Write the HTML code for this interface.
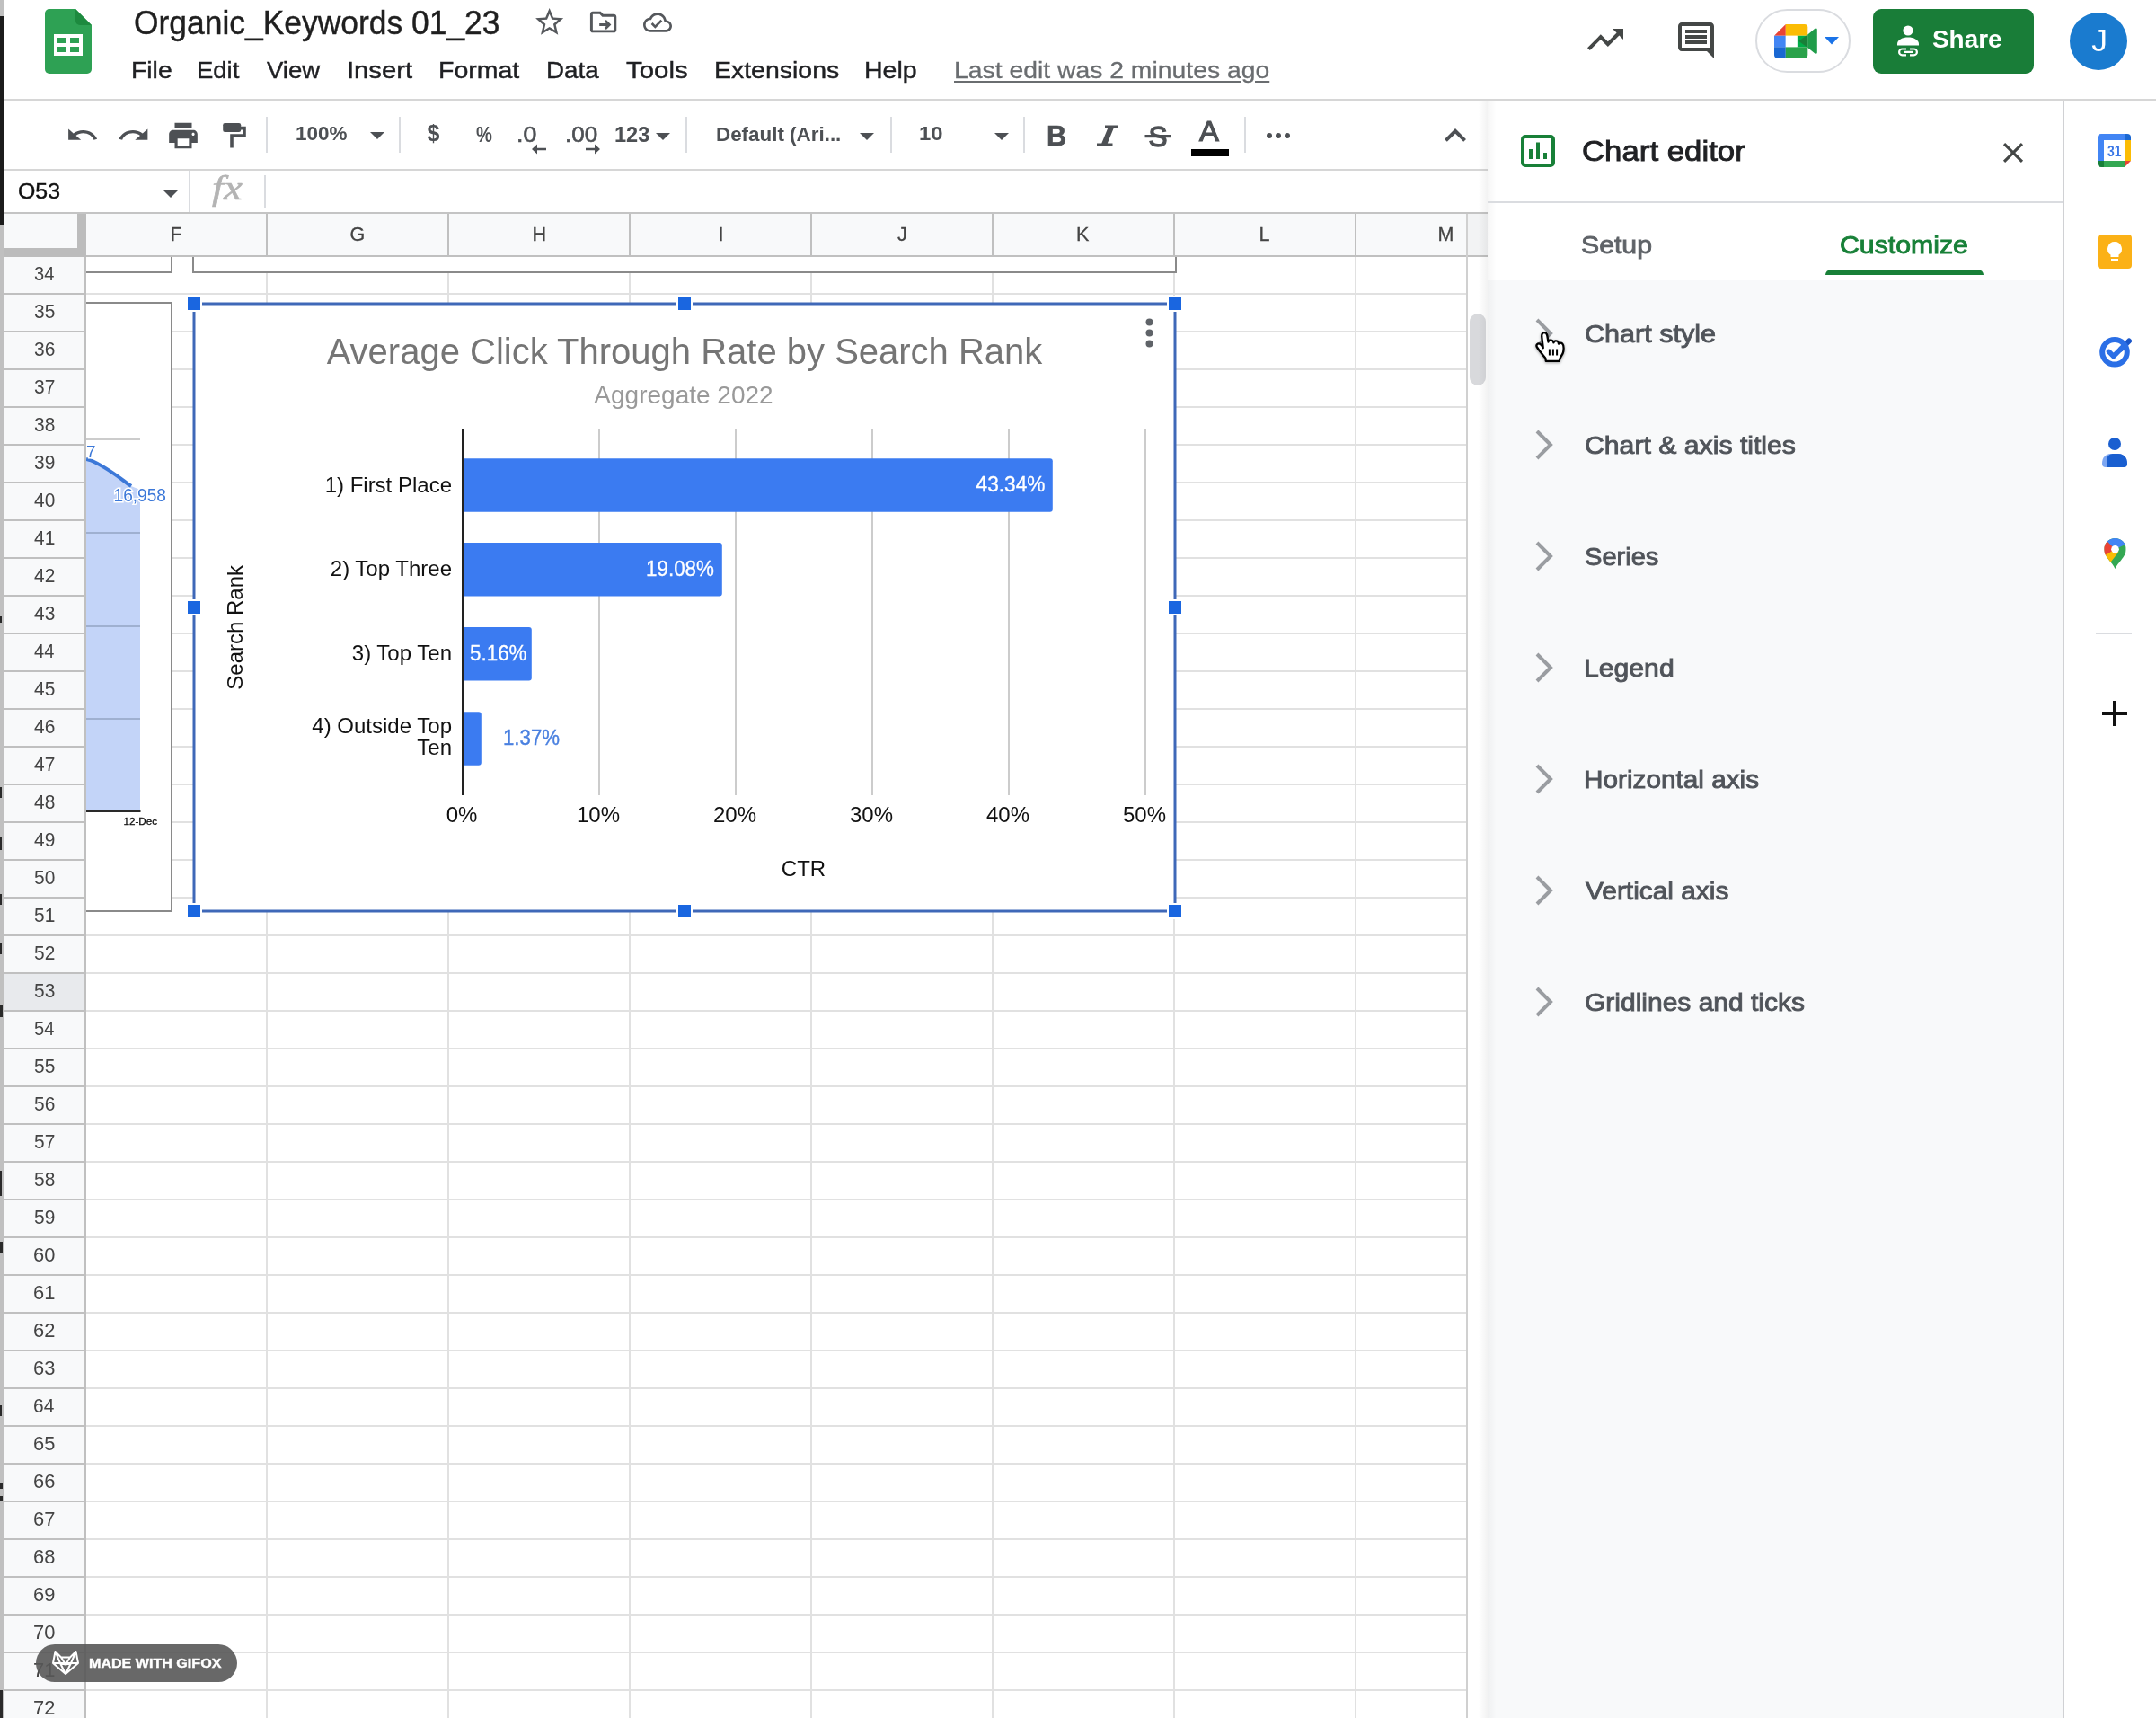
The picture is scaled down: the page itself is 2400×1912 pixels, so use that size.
<!DOCTYPE html>
<html lang="en"><head><meta charset="utf-8"><title>Organic_Keywords 01_23 - Google Sheets</title>
<style>
html,body{margin:0;padding:0;background:#fff}
body{width:2400px;height:1912px;overflow:hidden;position:relative;font-family:"Liberation Sans",sans-serif}
#app{position:absolute;left:0;top:0;width:2400px;height:1912px;overflow:hidden;will-change:transform}
.a{position:absolute;display:block}
.t{position:absolute;display:block;white-space:nowrap;line-height:1;height:1em;transform-origin:0 50%}
#cells i{position:absolute;display:block;background:#e1e1e1}
.gh{left:0;width:1537px;height:2px}
.gv{top:0;width:2px;height:1626px}
</style></head>
<body>
<div id="app">
<div id="sheet" class="a" style="left:0;top:238px;width:1656px;height:1674px;background:#fff;overflow:hidden">
<div class="a" id="cells" style="left:96px;top:48px;width:1537px;height:1626px;overflow:hidden">
<i class="gh" style="top:40px"></i><i class="gh" style="top:82px"></i><i class="gh" style="top:124px"></i><i class="gh" style="top:166px"></i><i class="gh" style="top:208px"></i><i class="gh" style="top:250px"></i><i class="gh" style="top:292px"></i><i class="gh" style="top:334px"></i><i class="gh" style="top:376px"></i><i class="gh" style="top:418px"></i><i class="gh" style="top:460px"></i><i class="gh" style="top:502px"></i><i class="gh" style="top:544px"></i><i class="gh" style="top:586px"></i><i class="gh" style="top:628px"></i><i class="gh" style="top:670px"></i><i class="gh" style="top:712px"></i><i class="gh" style="top:754px"></i><i class="gh" style="top:796px"></i><i class="gh" style="top:838px"></i><i class="gh" style="top:880px"></i><i class="gh" style="top:922px"></i><i class="gh" style="top:964px"></i><i class="gh" style="top:1006px"></i><i class="gh" style="top:1048px"></i><i class="gh" style="top:1090px"></i><i class="gh" style="top:1132px"></i><i class="gh" style="top:1174px"></i><i class="gh" style="top:1216px"></i><i class="gh" style="top:1258px"></i><i class="gh" style="top:1300px"></i><i class="gh" style="top:1342px"></i><i class="gh" style="top:1384px"></i><i class="gh" style="top:1426px"></i><i class="gh" style="top:1468px"></i><i class="gh" style="top:1510px"></i><i class="gh" style="top:1552px"></i><i class="gh" style="top:1594px"></i><i class="gv" style="left:200px"></i><i class="gv" style="left:402px"></i><i class="gv" style="left:604px"></i><i class="gv" style="left:806px"></i><i class="gv" style="left:1008px"></i><i class="gv" style="left:1210px"></i><i class="gv" style="left:1412px"></i>
</div>
<div class="a" id="colhdr" style="left:4px;top:0;width:1652px;height:46px;background:#f8f9fa;border-bottom:2px solid #c0c0c0"></div>
<div class="a" style="left:1634px;top:0;width:22px;height:46px;background:#f2f3f4"></div>
<i class="a" style="left:296px;top:0;width:2px;height:46px;background:#c0c0c0"></i>
<i class="a" style="left:498px;top:0;width:2px;height:46px;background:#c0c0c0"></i>
<i class="a" style="left:700px;top:0;width:2px;height:46px;background:#c0c0c0"></i>
<i class="a" style="left:902px;top:0;width:2px;height:46px;background:#c0c0c0"></i>
<i class="a" style="left:1104px;top:0;width:2px;height:46px;background:#c0c0c0"></i>
<i class="a" style="left:1306px;top:0;width:2px;height:46px;background:#c0c0c0"></i>
<i class="a" style="left:1508px;top:0;width:2px;height:46px;background:#c0c0c0"></i>
<i class="a" style="left:1632px;top:0;width:2px;height:1674px;background:#d0d0d0"></i>
<div class="a" id="rowhdr" style="left:4px;top:48px;width:90px;height:1626px;background:#f8f9fa;border-right:2px solid #c0c0c0"></div>
<div class="a" style="left:4px;top:846px;width:90px;height:40px;background:#e8eaed"></div>
<i class="a" style="left:4px;top:88px;width:92px;height:2px;background:#c0c0c0"></i>
<i class="a" style="left:4px;top:130px;width:92px;height:2px;background:#c0c0c0"></i>
<i class="a" style="left:4px;top:172px;width:92px;height:2px;background:#c0c0c0"></i>
<i class="a" style="left:4px;top:214px;width:92px;height:2px;background:#c0c0c0"></i>
<i class="a" style="left:4px;top:256px;width:92px;height:2px;background:#c0c0c0"></i>
<i class="a" style="left:4px;top:298px;width:92px;height:2px;background:#c0c0c0"></i>
<i class="a" style="left:4px;top:340px;width:92px;height:2px;background:#c0c0c0"></i>
<i class="a" style="left:4px;top:382px;width:92px;height:2px;background:#c0c0c0"></i>
<i class="a" style="left:4px;top:424px;width:92px;height:2px;background:#c0c0c0"></i>
<i class="a" style="left:4px;top:466px;width:92px;height:2px;background:#c0c0c0"></i>
<i class="a" style="left:4px;top:508px;width:92px;height:2px;background:#c0c0c0"></i>
<i class="a" style="left:4px;top:550px;width:92px;height:2px;background:#c0c0c0"></i>
<i class="a" style="left:4px;top:592px;width:92px;height:2px;background:#c0c0c0"></i>
<i class="a" style="left:4px;top:634px;width:92px;height:2px;background:#c0c0c0"></i>
<i class="a" style="left:4px;top:676px;width:92px;height:2px;background:#c0c0c0"></i>
<i class="a" style="left:4px;top:718px;width:92px;height:2px;background:#c0c0c0"></i>
<i class="a" style="left:4px;top:760px;width:92px;height:2px;background:#c0c0c0"></i>
<i class="a" style="left:4px;top:802px;width:92px;height:2px;background:#c0c0c0"></i>
<i class="a" style="left:4px;top:844px;width:92px;height:2px;background:#c0c0c0"></i>
<i class="a" style="left:4px;top:886px;width:92px;height:2px;background:#c0c0c0"></i>
<i class="a" style="left:4px;top:928px;width:92px;height:2px;background:#c0c0c0"></i>
<i class="a" style="left:4px;top:970px;width:92px;height:2px;background:#c0c0c0"></i>
<i class="a" style="left:4px;top:1012px;width:92px;height:2px;background:#c0c0c0"></i>
<i class="a" style="left:4px;top:1054px;width:92px;height:2px;background:#c0c0c0"></i>
<i class="a" style="left:4px;top:1096px;width:92px;height:2px;background:#c0c0c0"></i>
<i class="a" style="left:4px;top:1138px;width:92px;height:2px;background:#c0c0c0"></i>
<i class="a" style="left:4px;top:1180px;width:92px;height:2px;background:#c0c0c0"></i>
<i class="a" style="left:4px;top:1222px;width:92px;height:2px;background:#c0c0c0"></i>
<i class="a" style="left:4px;top:1264px;width:92px;height:2px;background:#c0c0c0"></i>
<i class="a" style="left:4px;top:1306px;width:92px;height:2px;background:#c0c0c0"></i>
<i class="a" style="left:4px;top:1348px;width:92px;height:2px;background:#c0c0c0"></i>
<i class="a" style="left:4px;top:1390px;width:92px;height:2px;background:#c0c0c0"></i>
<i class="a" style="left:4px;top:1432px;width:92px;height:2px;background:#c0c0c0"></i>
<i class="a" style="left:4px;top:1474px;width:92px;height:2px;background:#c0c0c0"></i>
<i class="a" style="left:4px;top:1516px;width:92px;height:2px;background:#c0c0c0"></i>
<i class="a" style="left:4px;top:1558px;width:92px;height:2px;background:#c0c0c0"></i>
<i class="a" style="left:4px;top:1600px;width:92px;height:2px;background:#c0c0c0"></i>
<i class="a" style="left:4px;top:1642px;width:92px;height:2px;background:#c0c0c0"></i>
<div class="a" style="left:4px;top:0;width:92px;height:48px;background:#bcbcbc"></div>
<div class="a" style="left:4px;top:0;width:82px;height:38px;background:#f8f9fa"></div>
</div>
<span class="t" style="left:189.50px;top:250.50px;font-size:21.5px;color:#444;-webkit-text-stroke:0.3px #444;">F</span>
<span class="t" style="left:389.50px;top:250.50px;font-size:21.5px;color:#444;-webkit-text-stroke:0.3px #444;">G</span>
<span class="t" style="left:592.50px;top:250.50px;font-size:21.5px;color:#444;-webkit-text-stroke:0.3px #444;">H</span>
<span class="t" style="left:799.50px;top:250.50px;font-size:21.5px;color:#444;-webkit-text-stroke:0.3px #444;">I</span>
<span class="t" style="left:999.00px;top:250.50px;font-size:21.5px;color:#444;-webkit-text-stroke:0.3px #444;">J</span>
<span class="t" style="left:1198.00px;top:250.50px;font-size:21.5px;color:#444;-webkit-text-stroke:0.3px #444;">K</span>
<span class="t" style="left:1401.50px;top:250.50px;font-size:21.5px;color:#444;-webkit-text-stroke:0.3px #444;">L</span>
<span class="t" style="left:1600.50px;top:250.50px;font-size:21.5px;color:#444;-webkit-text-stroke:0.3px #444;">M</span>
<span class="t" style="left:38.05px;top:293.65px;font-size:21.2px;color:#444;transform:scaleX(0.9460);">34</span>
<span class="t" style="left:38.05px;top:335.65px;font-size:21.2px;color:#444;transform:scaleX(0.9876);">35</span>
<span class="t" style="left:38.05px;top:377.65px;font-size:21.2px;color:#444;transform:scaleX(0.9876);">36</span>
<span class="t" style="left:38.05px;top:419.65px;font-size:21.2px;color:#444;transform:scaleX(0.9876);">37</span>
<span class="t" style="left:38.05px;top:461.65px;font-size:21.2px;color:#444;transform:scaleX(0.9876);">38</span>
<span class="t" style="left:38.05px;top:503.65px;font-size:21.2px;color:#444;transform:scaleX(0.9876);">39</span>
<span class="t" style="left:38.05px;top:545.65px;font-size:21.2px;color:#444;transform:scaleX(0.9876);">40</span>
<span class="t" style="left:38.05px;top:587.65px;font-size:21.2px;color:#444;transform:scaleX(0.9876);">41</span>
<span class="t" style="left:38.05px;top:629.65px;font-size:21.2px;color:#444;transform:scaleX(0.9876);">42</span>
<span class="t" style="left:38.05px;top:671.65px;font-size:21.2px;color:#444;transform:scaleX(0.9876);">43</span>
<span class="t" style="left:38.05px;top:713.65px;font-size:21.2px;color:#444;transform:scaleX(0.9460);">44</span>
<span class="t" style="left:38.05px;top:755.65px;font-size:21.2px;color:#444;transform:scaleX(0.9876);">45</span>
<span class="t" style="left:38.05px;top:797.65px;font-size:21.2px;color:#444;transform:scaleX(0.9876);">46</span>
<span class="t" style="left:38.05px;top:839.65px;font-size:21.2px;color:#444;transform:scaleX(0.9876);">47</span>
<span class="t" style="left:38.05px;top:881.65px;font-size:21.2px;color:#444;transform:scaleX(0.9876);">48</span>
<span class="t" style="left:38.05px;top:923.65px;font-size:21.2px;color:#444;transform:scaleX(0.9876);">49</span>
<span class="t" style="left:38.05px;top:965.65px;font-size:21.2px;color:#444;transform:scaleX(0.9876);">50</span>
<span class="t" style="left:38.05px;top:1007.65px;font-size:21.2px;color:#444;transform:scaleX(0.9876);">51</span>
<span class="t" style="left:38.05px;top:1049.65px;font-size:21.2px;color:#444;transform:scaleX(0.9876);">52</span>
<span class="t" style="left:38.05px;top:1091.65px;font-size:21.2px;color:#444;transform:scaleX(0.9876);">53</span>
<span class="t" style="left:38.05px;top:1133.65px;font-size:21.2px;color:#444;transform:scaleX(0.9460);">54</span>
<span class="t" style="left:38.05px;top:1175.65px;font-size:21.2px;color:#444;transform:scaleX(0.9876);">55</span>
<span class="t" style="left:38.05px;top:1217.65px;font-size:21.2px;color:#444;transform:scaleX(0.9876);">56</span>
<span class="t" style="left:38.05px;top:1259.65px;font-size:21.2px;color:#444;transform:scaleX(0.9876);">57</span>
<span class="t" style="left:38.05px;top:1301.65px;font-size:21.2px;color:#444;transform:scaleX(0.9876);">58</span>
<span class="t" style="left:38.05px;top:1343.65px;font-size:21.2px;color:#444;transform:scaleX(0.9876);">59</span>
<span class="t" style="left:37.02px;top:1385.65px;font-size:21.2px;color:#444;transform:scaleX(1.0329);">60</span>
<span class="t" style="left:37.02px;top:1427.65px;font-size:21.2px;color:#444;transform:scaleX(1.0329);">61</span>
<span class="t" style="left:37.02px;top:1469.65px;font-size:21.2px;color:#444;transform:scaleX(1.0329);">62</span>
<span class="t" style="left:37.02px;top:1511.65px;font-size:21.2px;color:#444;transform:scaleX(1.0329);">63</span>
<span class="t" style="left:37.06px;top:1553.65px;font-size:21.2px;color:#444;transform:scaleX(0.9876);">64</span>
<span class="t" style="left:37.02px;top:1595.65px;font-size:21.2px;color:#444;transform:scaleX(1.0329);">65</span>
<span class="t" style="left:37.02px;top:1637.65px;font-size:21.2px;color:#444;transform:scaleX(1.0329);">66</span>
<span class="t" style="left:37.02px;top:1679.65px;font-size:21.2px;color:#444;transform:scaleX(1.0329);">67</span>
<span class="t" style="left:37.02px;top:1721.65px;font-size:21.2px;color:#444;transform:scaleX(1.0329);">68</span>
<span class="t" style="left:37.02px;top:1763.65px;font-size:21.2px;color:#444;transform:scaleX(1.0329);">69</span>
<span class="t" style="left:37.02px;top:1805.65px;font-size:21.2px;color:#444;transform:scaleX(1.0329);">70</span>
<span class="t" style="left:37.02px;top:1847.65px;font-size:21.2px;color:#444;transform:scaleX(1.0329);">71</span>
<span class="t" style="left:37.02px;top:1889.65px;font-size:21.2px;color:#444;transform:scaleX(1.0329);">72</span>
<div class="a" style="left:0px;top:0px;width:4px;height:1912px;background:#c0c0c0"></div>
<div class="a" style="left:0px;top:18px;width:4px;height:232px;background:#1c1c1c"></div>
<div class="a" style="left:0px;top:686px;width:2px;height:7px;background:#2a2a2a"></div>
<div class="a" style="left:0px;top:876px;width:2px;height:12px;background:#2a2a2a"></div>
<div class="a" style="left:0px;top:932px;width:2px;height:14px;background:#2a2a2a"></div>
<div class="a" style="left:0px;top:995px;width:2px;height:12px;background:#2a2a2a"></div>
<div class="a" style="left:0px;top:1050px;width:2px;height:12px;background:#2a2a2a"></div>
<div class="a" style="left:0px;top:1118px;width:3px;height:14px;background:#2a2a2a"></div>
<div class="a" style="left:0px;top:1303px;width:2px;height:28px;background:#2a2a2a"></div>
<div class="a" style="left:0px;top:1382px;width:3px;height:12px;background:#2a2a2a"></div>
<div class="a" style="left:0px;top:1564px;width:2px;height:12px;background:#2a2a2a"></div>
<div class="a" style="left:0px;top:1651px;width:3px;height:6px;background:#2a2a2a"></div>
<div class="a" style="left:0px;top:1665px;width:3px;height:6px;background:#2a2a2a"></div>
<div class="a" style="left:0px;top:1881px;width:3px;height:31px;background:#2a2a2a"></div>
<svg class="a" style="left:96px;top:286px" width="1240" height="760" viewBox="96 286 1240 760"><path d="M96 303H191V286" fill="none" stroke="#8a8a8a" stroke-width="2"/><rect x="96" y="286" width="94" height="16" fill="#fff"/><rect x="216" y="286" width="1092" height="16" fill="#fff"/><path d="M215 286V303H1309V286" fill="none" stroke="#8a8a8a" stroke-width="2"/><rect x="90" y="337" width="101" height="677" fill="#fff" stroke="#8a8a8a" stroke-width="2"/><path d="M96 489H156" stroke="#ccc" stroke-width="2"/><path d="M96 511 L100 512 C118 518 132 530 146 541 L156 545 V903 H96Z" fill="#c3d4f8"/><path d="M96 593H156M96 697H156M96 800H156" stroke="#9fb0d0" stroke-width="2"/><path d="M96 903H156.500" stroke="#2a2a2a" stroke-width="2"/><path d="M96 511 L100 512 C118 519 132 531 146 541" fill="none" stroke="#3c78d8" stroke-width="4"/><text x="96" y="509" font-size="19" fill="#3c78d8" stroke="#fff" stroke-width="3" paint-order="stroke">7</text><text x="126.5" y="558" font-size="20.5" fill="#3c78d8" stroke="#fff" stroke-width="3" paint-order="stroke" textLength="58.5" lengthAdjust="spacingAndGlyphs">16,958</text><text x="137.500" y="918" font-size="11.800" fill="#111" stroke="#111" stroke-width=".3" textLength="37.500" lengthAdjust="spacingAndGlyphs">12-Dec</text></svg>
<svg class="a" id="chart" style="left:206px;top:328px" width="1112" height="696" viewBox="206 328 1112 696" font-family="Liberation Sans, sans-serif"><rect x="216" y="338" width="1092" height="676" fill="#fff"/><rect x="666" y="477" width="2" height="408" fill="#ccc"/><rect x="818" y="477" width="2" height="408" fill="#ccc"/><rect x="970" y="477" width="2" height="408" fill="#ccc"/><rect x="1122" y="477" width="2" height="408" fill="#ccc"/><rect x="1274" y="477" width="2" height="408" fill="#ccc"/><path d="M515 510.3H1168.8a3 3 0 0 1 3 3V566.8a3 3 0 0 1 -3 3H515Z" fill="#3b7bf1"/><path d="M515 604.0H800.8a3 3 0 0 1 3 3V660.5a3 3 0 0 1 -3 3H515Z" fill="#3b7bf1"/><path d="M515 698.1H588.8a3 3 0 0 1 3 3V754.6a3 3 0 0 1 -3 3H515Z" fill="#3b7bf1"/><path d="M515 792.2H532.8a3 3 0 0 1 3 3V848.7a3 3 0 0 1 -3 3H515Z" fill="#3b7bf1"/><rect x="514" y="477" width="2" height="408" fill="#222"/><text x="762" y="404.5" font-size="40" fill="#757575" text-anchor="middle">Average Click Through Rate by Search Rank</text><text x="761" y="449" font-size="28" fill="#999" text-anchor="middle">Aggregate 2022</text><text x="503" y="548.2" font-size="24" fill="#111" text-anchor="end">1) First Place</text><text x="503" y="641.3" font-size="24" fill="#111" text-anchor="end">2) Top Three</text><text x="503" y="735" font-size="24" fill="#111" text-anchor="end">3) Top Ten</text><text x="503" y="815.8" font-size="24" fill="#111" text-anchor="end">4) Outside Top</text><text x="503" y="840.3" font-size="24" fill="#111" text-anchor="end">Ten</text><text x="1163.5" y="547.3" font-size="23.5" fill="#fff" stroke="#fff" stroke-width=".3" text-anchor="end" textLength="77" lengthAdjust="spacingAndGlyphs">43.34%</text><text x="795" y="641.3" font-size="23.5" fill="#fff" stroke="#fff" stroke-width=".3" text-anchor="end" textLength="76" lengthAdjust="spacingAndGlyphs">19.08%</text><text x="586.5" y="735" font-size="23.5" fill="#fff" stroke="#fff" stroke-width=".3" text-anchor="end" textLength="63.5" lengthAdjust="spacingAndGlyphs">5.16%</text><text x="560" y="829" font-size="23.5" fill="#4a80e0" stroke="#4a80e0" stroke-width=".4" textLength="63" lengthAdjust="spacingAndGlyphs">1.37%</text><text x="514" y="915.3" font-size="24" fill="#111" text-anchor="middle">0%</text><text x="666" y="915.3" font-size="24" fill="#111" text-anchor="middle">10%</text><text x="818" y="915.3" font-size="24" fill="#111" text-anchor="middle">20%</text><text x="970" y="915.3" font-size="24" fill="#111" text-anchor="middle">30%</text><text x="1122" y="915.3" font-size="24" fill="#111" text-anchor="middle">40%</text><text x="1274" y="915.3" font-size="24" fill="#111" text-anchor="middle">50%</text><text x="894.5" y="975.3" font-size="24" fill="#111" text-anchor="middle">CTR</text><text transform="translate(269.5 698.3) rotate(-90)" font-size="24" fill="#111" text-anchor="middle">Search Rank</text><circle cx="1279.5" cy="358.5" r="4" fill="#5f6368"/><circle cx="1279.5" cy="370.5" r="4" fill="#5f6368"/><circle cx="1279.5" cy="382.5" r="4" fill="#5f6368"/><rect x="216" y="338" width="1092" height="676" fill="none" stroke="#3f68b8" stroke-width="3"/><rect x="207" y="329" width="18" height="18" fill="#fff"/><rect x="209" y="331" width="14" height="14" fill="#1a66e0"/><rect x="207" y="667.0" width="18" height="18" fill="#fff"/><rect x="209" y="669.0" width="14" height="14" fill="#1a66e0"/><rect x="207" y="1005" width="18" height="18" fill="#fff"/><rect x="209" y="1007" width="14" height="14" fill="#1a66e0"/><rect x="753.0" y="329" width="18" height="18" fill="#fff"/><rect x="755.0" y="331" width="14" height="14" fill="#1a66e0"/><rect x="753.0" y="1005" width="18" height="18" fill="#fff"/><rect x="755.0" y="1007" width="14" height="14" fill="#1a66e0"/><rect x="1299" y="329" width="18" height="18" fill="#fff"/><rect x="1301" y="331" width="14" height="14" fill="#1a66e0"/><rect x="1299" y="667.0" width="18" height="18" fill="#fff"/><rect x="1301" y="669.0" width="14" height="14" fill="#1a66e0"/><rect x="1299" y="1005" width="18" height="18" fill="#fff"/><rect x="1301" y="1007" width="14" height="14" fill="#1a66e0"/></svg>
<div class="a" style="left:1636px;top:349px;width:18px;height:80px;background:#d8d9dc;border-radius:9px"></div>
<div id="header" class="a" style="left:4px;top:0;width:2396px;height:110px;background:#fff;border-bottom:2px solid #d6d6d6"></div>
<svg class="a" style="left:50px;top:10px" width="52" height="72" viewBox="0 0 52 72"><path d="M5 0H34L52 18V67a5 5 0 0 1-5 5H5a5 5 0 0 1-5-5V5a5 5 0 0 1 5-5z" fill="#2ea154"/><path d="M34 0L52 18H39a5 5 0 0 1-5-5z" fill="#1d8a3f"/><path d="M10 28H42V52H10z M14 32V38H24V32z M28 32V38H38V32z M14 42V48H24V42z M28 42V48H38V42z" fill="#fff" fill-rule="evenodd"/></svg>
<span class="t" style="left:148.52px;top:8.12px;font-size:36px;color:#1f1f1f;transform:scaleX(0.9837);-webkit-text-stroke:0.4px #1f1f1f;">Organic_Keywords 01_23</span>
<svg class="a" style="left:593.4px;top:5.8px" width="37.3" height="37.3" viewBox="0 0 24 24"><path fill="#55585c" d="M22 9.24l-7.19-.62L12 2 9.19 8.63 2 9.24l5.46 4.73L5.82 21 12 17.27 18.18 21l-1.63-7.03L22 9.24zM12 15.4l-3.76 2.27 1-4.28-3.32-2.88 4.38-.38L12 6.1l1.71 4.04 4.38.38-3.32 2.88 1 4.28L12 15.4z"/></svg>
<svg class="a" style="left:653.6px;top:6.6px" width="35.2" height="35.2" viewBox="0 0 24 24"><path fill="#55585c" d="M20 6h-8l-2-2H4c-1.1 0-2 .9-2 2v12c0 1.1.9 2 2 2h16c1.1 0 2-.9 2-2V8c0-1.1-.9-2-2-2zm0 12H4V6h5.17l2 2H20v10zm-7.2-1.6 1.4 1.4L18 14l-3.8-3.8-1.4 1.4L14.2 13H9v2h5.2l-1.4 1.4z"/></svg>
<svg class="a" style="left:716.2px;top:8.7px" width="32" height="32" viewBox="0 0 24 24"><path fill="#55585c" d="M19.35 10.04C18.67 6.59 15.64 4 12 4 9.11 4 6.6 5.64 5.35 8.04 2.34 8.36 0 10.91 0 14c0 3.31 2.69 6 6 6h13c2.76 0 5-2.24 5-5 0-2.64-2.05-4.78-4.65-4.96zM19 18H6c-2.21 0-4-1.79-4-4 0-2.05 1.53-3.76 3.56-3.97l1.07-.11.5-.95C8.08 7.14 9.94 6 12 6c2.62 0 4.88 1.86 5.39 4.43l.3 1.5 1.53.11c1.56.1 2.78 1.41 2.78 2.96 0 1.65-1.35 3-3 3zm-9-3.82l-2.09-2.09L6.5 13.5 10 17l6.01-6.01-1.41-1.41z"/></svg>
<span class="t" style="left:145.56px;top:65.16px;font-size:26.5px;color:#202124;transform:scaleX(1.0685);-webkit-text-stroke:0.4px #202124;">File</span>
<span class="t" style="left:219.13px;top:65.16px;font-size:26.5px;color:#202124;transform:scaleX(1.0361);-webkit-text-stroke:0.4px #202124;">Edit</span>
<span class="t" style="left:297.20px;top:65.16px;font-size:26.5px;color:#202124;transform:scaleX(1.0394);-webkit-text-stroke:0.4px #202124;">View</span>
<span class="t" style="left:385.90px;top:65.16px;font-size:26.5px;color:#202124;transform:scaleX(1.1015);-webkit-text-stroke:0.4px #202124;">Insert</span>
<span class="t" style="left:488.05px;top:65.16px;font-size:26.5px;color:#202124;transform:scaleX(1.0755);-webkit-text-stroke:0.4px #202124;">Format</span>
<span class="t" style="left:607.91px;top:65.16px;font-size:26.5px;color:#202124;transform:scaleX(1.0472);-webkit-text-stroke:0.4px #202124;">Data</span>
<span class="t" style="left:696.90px;top:65.16px;font-size:26.5px;color:#202124;transform:scaleX(1.1101);-webkit-text-stroke:0.4px #202124;">Tools</span>
<span class="t" style="left:794.55px;top:65.16px;font-size:26.5px;color:#202124;transform:scaleX(1.0740);-webkit-text-stroke:0.4px #202124;">Extensions</span>
<span class="t" style="left:962.45px;top:65.16px;font-size:26.5px;color:#202124;transform:scaleX(1.0741);-webkit-text-stroke:0.4px #202124;">Help</span>
<span class="t" style="left:1062.26px;top:64.96px;font-size:26.5px;color:#6a6d70;transform:scaleX(1.0692);-webkit-text-stroke:0.3px #6a6d70;text-decoration:underline;text-decoration-thickness:2px;text-underline-offset:3px;">Last edit was 2 minutes ago</span>
<svg class="a" style="left:1762.5px;top:20px" width="48" height="48" viewBox="0 0 24 24"><path fill="#444746" d="M16 6l2.29 2.29-4.88 4.88-4-4L2 16.59 3.41 18l6-6 4 4 6.3-6.29L22 12V6z"/></svg>
<svg class="a" style="left:1864px;top:21px" width="48" height="48" viewBox="0 0 24 24"><path fill="#444746" d="M21.99 4c0-1.1-.89-2-1.99-2H4c-1.1 0-2 .9-2 2v12c0 1.1.9 2 2 2h14l4 4-.01-18zM20 4v12H4V4h16zM6 12h12v2H6zm0-3h12v2H6zm0-3h12v2H6z"/></svg>
<div class="a" style="left:1954px;top:10px;width:106px;height:71px;box-sizing:border-box;border:2px solid #dadce0;border-radius:36px;background:#fff"></div>
<svg class="a" style="left:1975px;top:27px" width="48" height="38" viewBox="0 0 48 38"><path d="M0 12.800L12.800 0V12.800z" fill="#ea4335"/><path d="M12.800 0H33.800a3.500 3.500 0 0 1 3.500 3.500V12.800H12.800z" fill="#fbbc04"/><path d="M0 12.800H12.800V25.200H0z" fill="#4285f4"/><path d="M0 25.200H12.800V37.400H3.500a3.500 3.500 0 0 1-3.500-3.500z" fill="#1967d2"/><path d="M12.800 25.200H37.300V33.900a3.500 3.500 0 0 1-3.500 3.500H12.800z" fill="#2aa24a"/><path d="M25.600 12.800H37.300V25.200H25.600z" fill="#00ac47"/><path d="M37.300 11.500L45.300 4.800a1.500 1.500 0 0 1 2.500 1.200V31.400a1.500 1.500 0 0 1-2.500 1.200L37.300 26z" fill="#1f9c49"/><path d="M37.300 11.500V26L27.200 18.800z" fill="#188038"/><path d="M12.800 12.800H25.600V25.200H12.800z" fill="#fff"/></svg>
<svg class="a" style="left:2031px;top:41px" width="16" height="9" viewBox="0 0 16 9"><path d="M0 0H16L8 8.5z" fill="#1a73e8"/></svg>
<div class="a" style="left:2085px;top:10px;width:179px;height:72px;background:#197d38;border-radius:9px"></div>
<svg class="a" style="left:2109px;top:27px" width="30" height="36" viewBox="0 0 30 36"><circle cx="15" cy="7" r="5.6" fill="#fff"/><path d="M3 22c0-5 6-7.5 12-7.5s12 2.500 12 7.500V23.500H3z" fill="#fff"/><path d="M13 27.500H8.500a3.400 3.400 0 0 0 0 6.800H13M17 27.500h4.500a3.400 3.400 0 0 1 0 6.800H17M10 30.900H20" fill="none" stroke="#fff" stroke-width="2.200"/></svg>
<span class="t" style="left:2151.00px;top:29.89px;font-size:28px;color:#fff;font-weight:700;transform:scaleX(0.9968);">Share</span>
<div class="a" style="left:2304px;top:14px;width:64px;height:64px;background:#1a7bcf;border-radius:50%"></div>
<span class="t" style="left:2328.30px;top:27.94px;font-size:35.5px;color:#fff;">J</span>
<div id="toolbar" class="a" style="left:4px;top:112px;width:1652px;height:76px;background:#fff;border-bottom:2px solid #d6d6d6"></div>
<svg class="a" style="left:72.9px;top:134.4px" width="37.5" height="32.8" viewBox="0 0 24 24" preserveAspectRatio="none"><path fill="#4d5054" d="M12.5 8c-2.65 0-5.05.99-6.9 2.6L2 7v9h9l-3.62-3.62c1.39-1.16 3.16-1.88 5.12-1.88 3.54 0 6.55 2.31 7.6 5.5l2.37-.78C21.08 11.03 17.15 8 12.5 8z"/></svg>
<svg class="a" style="left:129.8px;top:134.4px" width="37.5" height="32.8" viewBox="0 0 24 24" preserveAspectRatio="none"><path fill="#4d5054" d="M18.4 10.6C16.55 8.99 14.15 8 11.5 8c-4.65 0-8.58 3.03-9.96 7.22L3.9 16c1.05-3.19 4.05-5.5 7.6-5.5 1.95 0 3.73.72 5.12 1.88L13 16h9V7l-3.6 3.6z"/></svg>
<svg class="a" style="left:185px;top:132px" width="38" height="38" viewBox="0 0 24 24"><path fill="#4d5054" d="M19 8H5c-1.66 0-3 1.34-3 3v6h4v4h12v-4h4v-6c0-1.66-1.34-3-3-3zm-3 11H8v-5h8v5zm3-7c-.55 0-1-.45-1-1s.45-1 1-1 1 .45 1 1-.45 1-1 1zm-1-9H6v4h12V3z"/></svg>
<svg class="a" style="left:244px;top:132px" width="34" height="36" viewBox="244 132 34 36"><rect x="248.200" y="137" width="20" height="10" rx="2.200" fill="#4d5054"/><path d="M268 142.600H272V151H258V164.500" fill="none" stroke="#4d5054" stroke-width="3.600"/></svg>
<div class="a" style="left:296px;top:130px;width:2px;height:40px;background:#dadce0"></div>
<div class="a" style="left:444px;top:130px;width:2px;height:40px;background:#dadce0"></div>
<div class="a" style="left:763px;top:130px;width:2px;height:40px;background:#dadce0"></div>
<div class="a" style="left:991px;top:130px;width:2px;height:40px;background:#dadce0"></div>
<div class="a" style="left:1139px;top:130px;width:2px;height:40px;background:#dadce0"></div>
<div class="a" style="left:1385px;top:130px;width:2px;height:40px;background:#dadce0"></div>
<span class="t" style="left:328.50px;top:137.83px;font-size:22.4px;color:#4d5054;font-weight:700;transform:scaleX(1.0025);">100%</span>
<svg class="a" style="left:412px;top:147px" width="16" height="8" viewBox="0 0 16 8"><path d="M0 0H16L8.0 8z" fill="#4d5054"/></svg>
<span class="t" style="left:475.50px;top:136.33px;font-size:25px;color:#4d5054;font-weight:700;">$</span>
<span class="t" style="left:529.50px;top:138.53px;font-size:23px;color:#4d5054;font-weight:700;transform:scaleX(0.8750);">%</span>
<span class="t" style="left:575.18px;top:138.53px;font-size:23px;color:#4d5054;transform:scaleX(1.1592);-webkit-text-stroke:0.6px #4d5054;">.0</span>
<span class="t" style="left:629.24px;top:138.53px;font-size:23px;color:#4d5054;transform:scaleX(1.1308);-webkit-text-stroke:0.6px #4d5054;">.00</span>
<svg class="a" style="left:590px;top:158px" width="82" height="16" viewBox="590 158 82 16"><path d="M608 164.700H598V160.500L592 166l6 5.500V167.300H608z" fill="#4d5054"/><path d="M652 164.700H662V160.500L668 166l-6 5.500V167.300H652z" fill="#4d5054"/></svg>
<span class="t" style="left:684.47px;top:138.53px;font-size:23px;color:#4d5054;font-weight:700;transform:scaleX(1.0251);">123</span>
<svg class="a" style="left:730px;top:148px" width="16" height="8" viewBox="0 0 16 8"><path d="M0 0H16L8.0 8z" fill="#4d5054"/></svg>
<span class="t" style="left:797.00px;top:138.53px;font-size:22.4px;color:#4d5054;font-weight:700;">Default (Ari...</span>
<svg class="a" style="left:957px;top:148px" width="16" height="8" viewBox="0 0 16 8"><path d="M0 0H16L8.0 8z" fill="#4d5054"/></svg>
<span class="t" style="left:1023.43px;top:138.03px;font-size:22.4px;color:#4d5054;font-weight:700;transform:scaleX(1.0660);">10</span>
<svg class="a" style="left:1107px;top:148px" width="16" height="8" viewBox="0 0 16 8"><path d="M0 0H16L8.0 8z" fill="#4d5054"/></svg>
<span class="t" style="left:1165.05px;top:135.53px;font-size:31.5px;color:#4d5054;font-weight:700;transform:scaleX(0.9750);-webkit-text-stroke:0.7px #4d5054;">B</span>
<svg class="a" style="left:1218px;top:136px" width="160" height="42" viewBox="1218 136 160 42"><path d="M1230 139.500H1245V142.700H1239.700L1232.800 159.500H1238.500V162.700H1221V159.500H1226.300L1233.200 142.700H1230z" fill="#4d5054"/><rect x="1274.500" y="150" width="28.500" height="3.200" fill="#4d5054"/><rect x="1326" y="166" width="42" height="8" fill="#000"/></svg>
<span class="t" style="left:1278.50px;top:136.63px;font-size:31.5px;color:#4d5054;-webkit-text-stroke:1.3px #4d5054;">S</span>
<span class="t" style="left:1335.00px;top:130.41px;font-size:32px;color:#4d5054;transform:scaleX(1.0227);-webkit-text-stroke:1.2px #4d5054;">A</span>
<div class="a" style="left:1410px;top:148px;width:6px;height:6px;background:#4d5054;border-radius:50%"></div>
<div class="a" style="left:1420px;top:148px;width:6px;height:6px;background:#4d5054;border-radius:50%"></div>
<div class="a" style="left:1430px;top:148px;width:6px;height:6px;background:#4d5054;border-radius:50%"></div>
<svg class="a" style="left:1596px;top:126.5px" width="48" height="48" viewBox="0 0 24 24"><path fill="#4d5054" d="M12 8l-6 6 1.41 1.41L12 10.83l4.59 4.58L18 14z"/></svg>
<div id="fbar" class="a" style="left:4px;top:190px;width:1652px;height:46px;background:#fff;border-bottom:2px solid #c4c4c4"></div>
<span class="t" style="left:19.97px;top:200.81px;font-size:24.2px;color:#111;transform:scaleX(1.0279);-webkit-text-stroke:0.4px #111;">O53</span>
<svg class="a" style="left:182px;top:212px" width="16" height="8" viewBox="0 0 16 8"><path d="M0 0H16L8 8z" fill="#4d5054"/></svg>
<div class="a" style="left:210px;top:190px;width:2px;height:46px;background:#dadce0"></div>
<div class="a" style="left:294px;top:195px;width:2px;height:36px;background:#dadce0"></div>
<span class="t" style="left:235.50px;top:189.68px;font-size:38px;color:#b4b4b4;font-family:'Liberation Serif', serif;font-style:italic;transform:scaleX(1.2338);-webkit-text-stroke:0.6px #b4b4b4;">fx</span>
<div class="a" style="left:1646px;top:112px;width:10px;height:1800px;background:linear-gradient(90deg,rgba(0,0,0,0),rgba(0,0,0,.05))"></div>
<div id="panel" class="a" style="left:1656px;top:112px;width:640px;height:1800px;background:#f8f9fa;border-right:2px solid #d0d1d4"></div>
<div class="a" style="left:1656px;top:112px;width:640px;height:200px;background:#fff"></div>
<div class="a" style="left:1656px;top:112px;width:10px;height:1800px;background:linear-gradient(90deg,rgba(0,0,0,.035),rgba(0,0,0,0))"></div>
<div class="a" style="left:1656px;top:224px;width:640px;height:2px;background:#dadce0"></div>
<svg class="a" style="left:1693px;top:150px" width="38" height="36" viewBox="0 0 38 36"><rect x="2" y="2" width="34" height="32" rx="3" fill="#fff" stroke="#188038" stroke-width="4"/><path d="M9 16h4v11H9zM17 8.500h4V27H17zM25 20h4v7H25z" fill="#188038"/></svg>
<span class="t" style="left:1760.91px;top:151.71px;font-size:32px;color:#202124;transform:scaleX(1.0869);-webkit-text-stroke:0.9px #202124;">Chart editor</span>
<svg class="a" style="left:2222px;top:151px" width="38" height="38" viewBox="0 0 24 24"><path fill="#444746" d="M19 6.41L17.59 5 12 10.59 6.41 5 5 6.41 10.59 12 5 17.59 6.41 19 12 13.41 17.59 19 19 17.59 13.41 12z"/></svg>
<span class="t" style="left:1760.40px;top:259.42px;font-size:27.5px;color:#5f6368;transform:scaleX(1.0982);-webkit-text-stroke:0.9px #5f6368;">Setup</span>
<span class="t" style="left:2048.40px;top:259.42px;font-size:27.5px;color:#188038;transform:scaleX(1.1003);-webkit-text-stroke:0.9px #188038;">Customize</span>
<div class="a" style="left:2032px;top:300px;width:176px;height:6px;background:#188038;border-radius:6px 6px 0 0"></div>
<svg class="a" style="left:1706px;top:352.0px" width="26" height="38" viewBox="0 0 26 38"><path d="M5 4L20 19L5 34" fill="none" stroke="#9a9da1" stroke-width="4"/></svg>
<span class="t" style="left:1763.89px;top:357.63px;font-size:27.6px;color:#50545a;transform:scaleX(1.1070);-webkit-text-stroke:0.9px #50545a;">Chart style</span>
<svg class="a" style="left:1706px;top:476.1px" width="26" height="38" viewBox="0 0 26 38"><path d="M5 4L20 19L5 34" fill="none" stroke="#9a9da1" stroke-width="4"/></svg>
<span class="t" style="left:1763.91px;top:481.68px;font-size:27.6px;color:#50545a;transform:scaleX(1.0945);-webkit-text-stroke:0.9px #50545a;">Chart &amp; axis titles</span>
<svg class="a" style="left:1706px;top:600.1px" width="26" height="38" viewBox="0 0 26 38"><path d="M5 4L20 19L5 34" fill="none" stroke="#9a9da1" stroke-width="4"/></svg>
<span class="t" style="left:1763.95px;top:605.73px;font-size:27.6px;color:#50545a;transform:scaleX(1.0534);-webkit-text-stroke:0.9px #50545a;">Series</span>
<svg class="a" style="left:1706px;top:724.1px" width="26" height="38" viewBox="0 0 26 38"><path d="M5 4L20 19L5 34" fill="none" stroke="#9a9da1" stroke-width="4"/></svg>
<span class="t" style="left:1762.81px;top:729.78px;font-size:27.6px;color:#50545a;transform:scaleX(1.0932);-webkit-text-stroke:0.9px #50545a;">Legend</span>
<svg class="a" style="left:1706px;top:848.2px" width="26" height="38" viewBox="0 0 26 38"><path d="M5 4L20 19L5 34" fill="none" stroke="#9a9da1" stroke-width="4"/></svg>
<span class="t" style="left:1762.84px;top:853.83px;font-size:27.6px;color:#50545a;transform:scaleX(1.0776);-webkit-text-stroke:0.9px #50545a;">Horizontal axis</span>
<svg class="a" style="left:1706px;top:972.2px" width="26" height="38" viewBox="0 0 26 38"><path d="M5 4L20 19L5 34" fill="none" stroke="#9a9da1" stroke-width="4"/></svg>
<span class="t" style="left:1765.00px;top:977.88px;font-size:27.6px;color:#50545a;transform:scaleX(1.0824);-webkit-text-stroke:0.9px #50545a;">Vertical axis</span>
<svg class="a" style="left:1706px;top:1096.3px" width="26" height="38" viewBox="0 0 26 38"><path d="M5 4L20 19L5 34" fill="none" stroke="#9a9da1" stroke-width="4"/></svg>
<span class="t" style="left:1763.91px;top:1101.93px;font-size:27.6px;color:#50545a;transform:scaleX(1.0866);-webkit-text-stroke:0.9px #50545a;">Gridlines and ticks</span>
<svg class="a" style="left:1690px;top:340px;filter:drop-shadow(0 1px 1.500px rgba(0,0,0,.35))" width="80" height="80" viewBox="0 0 80 80"><path d="M27.800 47.300L26.200 34.500C26 31.400 27.500 30.200 28.900 30.200C30.600 30.200 31.900 31.200 32.300 33.500L33.500 40.500C33.900 38.600 36 38.200 37.600 38.800C38.800 39.200 39.300 40.200 39.400 41.300C40 39.300 42.500 38.900 43.800 39.800C44.600 40.400 44.900 41.500 45 42.600C45.800 41.300 48 41.200 49.200 42.500C50.600 44 50.800 48 50.200 51.500C49.800 54 47.500 56.500 46.500 59L45.800 61.800L30.800 61.800L30.400 58.600C27.500 55 23 50 20.800 46.200C19.600 44 21.500 41.600 24 42.600C25.500 43.200 26.800 45 27.800 47.300Z" fill="#fff" stroke="#000" stroke-width="2.300" stroke-linejoin="round"/><path d="M34.900 48.400V55.400M38.900 48.400V55.400M43.100 48.400V55.400" stroke="#000" stroke-width="2"/></svg>
<div id="rail" class="a" style="left:2298px;top:112px;width:102px;height:1800px;background:#fff"></div>
<svg class="a" style="left:2335px;top:149px" width="37" height="37" viewBox="0 0 37 37"><path d="M0 4a4 4 0 0 1 4-4H30V7H7V30H0z" fill="#4285f4"/><path d="M30 0h3a4 4 0 0 1 4 4V7H30z" fill="#1967d2"/><path d="M30 7H37V30H30z" fill="#fbbc04"/><path d="M7 30H30V37H7z" fill="#34a853"/><path d="M0 30H7V37H4a4 4 0 0 1-4-4z" fill="#188038"/><path d="M30 30H37L30 37z" fill="#ea4335"/><rect x="7" y="7" width="23" height="23" fill="#fff"/><text x="18.700" y="24.600" font-size="17" font-weight="700" font-family="Liberation Sans, sans-serif" fill="#3b78e7" text-anchor="middle" textLength="15.500" lengthAdjust="spacingAndGlyphs">31</text></svg>
<svg class="a" style="left:2335px;top:261px" width="38" height="38" viewBox="0 0 38 38"><rect width="38" height="38" rx="4" fill="#fbb116"/><path d="M19 8a8 8 0 0 0-4.500 14.600V25h9v-2.400A8 8 0 0 0 19 8z" fill="#fff"/><rect x="15" y="27" width="8" height="2.500" fill="#fff"/></svg>
<svg class="a" style="left:2336px;top:374px" width="38" height="36" viewBox="0 0 38 36"><path d="M25 14.500L34 5.500" fill="none" stroke="#1a56c8" stroke-width="6" stroke-linecap="round"/><circle cx="18" cy="17.800" r="13.800" fill="none" stroke="#2b6fe6" stroke-width="6"/><path d="M11.500 17.300l5.200 5.200L27 12.200" fill="none" stroke="#2b6fe6" stroke-width="5.500" stroke-linecap="round" stroke-linejoin="round"/></svg>
<svg class="a" style="left:2339px;top:486px" width="30" height="35" viewBox="0 0 30 35"><circle cx="15" cy="8" r="7" fill="#1a5fd0"/><path d="M1 30c0-8 5-11 10-11h8c5 0 10 3 10 11a4 4 0 0 1-4 4H5a4 4 0 0 1-4-4z" fill="#7da7f2"/><path d="M6 27c0-6 4-8 8-8h5c5 0 10 3 10 11a4 4 0 0 1-4 4H6z" fill="#1a5fd0"/></svg>
<svg class="a" style="left:2342px;top:599px" width="25" height="34" viewBox="0 0 26 36"><defs><clipPath id="pin"><path d="M13 0a13 13 0 0 1 13 13c0 5-3 9-6 13-2.500 3-5 6-7 10-2-4-4.500-7-7-10C3 22 0 18 0 13A13 13 0 0 1 13 0z"/></clipPath></defs><g clip-path="url(#pin)"><rect width="26" height="36" fill="#34a853"/><path d="M-1 19L9.500 9.500L17 16.500L7 29z" fill="#fbbc04"/><path d="M-1 -1L4 3.500L13 13L0 21z" fill="#ea4335"/><path d="M3.500 3.500L13 13L26 7V-1H3z" fill="#4285f4"/><circle cx="13" cy="13" r="4.600" fill="#fff"/></g></svg>
<div class="a" style="left:2333px;top:704px;width:40px;height:2px;background:#dadce0"></div>
<svg class="a" style="left:2330px;top:770px" width="48" height="48" viewBox="0 0 24 24"><path fill="#111" d="M19 13h-6v6h-2v-6H5v-2h6V5h2v6h6v2z"/></svg>
<div class="a" style="left:40px;top:1830px;width:224px;height:42px;background:rgba(88,88,88,.9);border-radius:21px"></div>
<svg class="a" style="left:58px;top:1837px" width="30" height="27" viewBox="0 0 30 27"><path d="M3.500 1L10 7.500H20L26.500 1 29 14 15 26 1 14z M1 14H29 M10 7.500L15 15.500 20 7.500 M3.500 1L9 14 15 26 21 14 26.500 1 M9 14L15 15.500 21 14" fill="none" stroke="#fff" stroke-width="2" stroke-linejoin="round"/></svg>
<span class="t" style="left:99.00px;top:1843.98px;font-size:14.2px;color:#fff;font-weight:700;transform:scaleX(1.1334);-webkit-text-stroke:0.4px #fff;">MADE WITH GIFOX</span>
</div>
</body></html>
